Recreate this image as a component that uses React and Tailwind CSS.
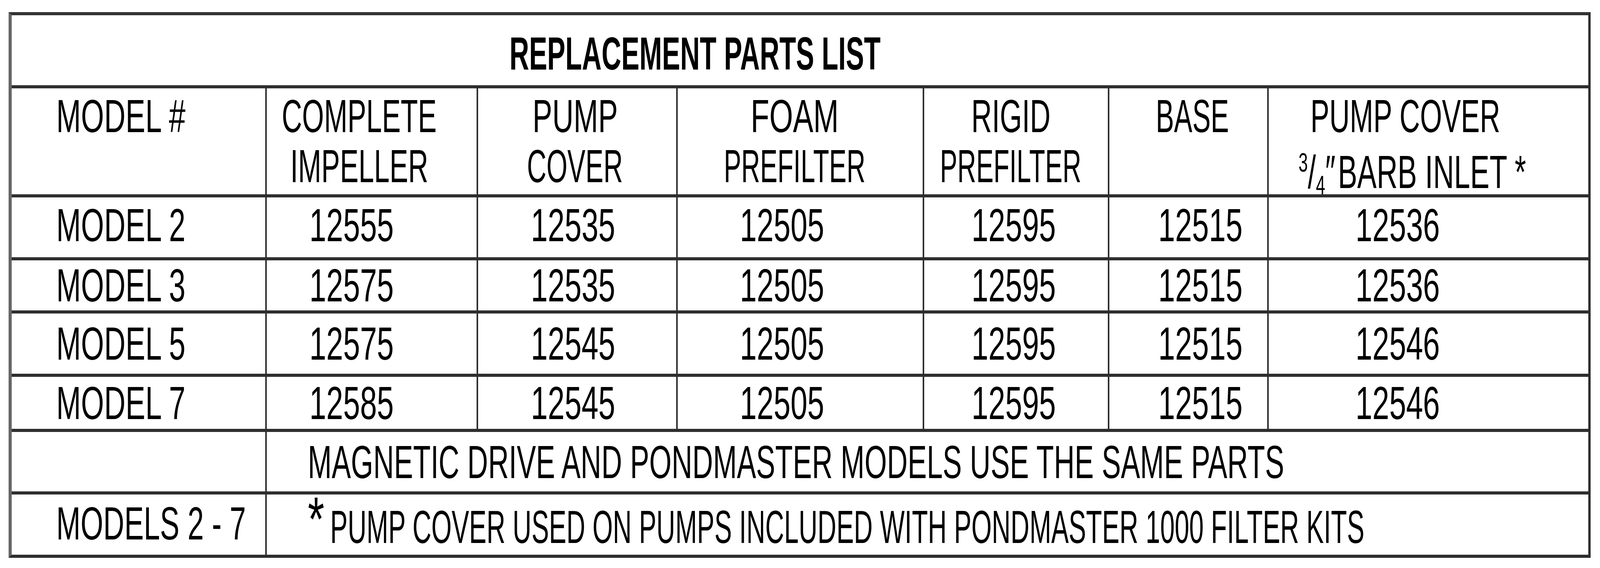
const font = "font-['Liberation_Sans',Arial,sans-serif]";

const grid = "grid grid-cols-[653px_541px_511px_631px_474px_408px_818px]";
const line = "border-[#2e2e2e]";

// header columns 2-6; each line is squeezed on its own so it keeps the narrow look of the original
const headers = [
  { pad: "pr-[63px]", lines: [["COMPLETE", "scale-x-[0.611]"], ["IMPELLER", "scale-x-[0.605]"]] },
  { pad: "pr-[11px]", lines: [["PUMP", "scale-x-[0.641]"], ["COVER", "scale-x-[0.585]"]] },
  { pad: "pr-[29px]", lines: [["FOAM", "scale-x-[0.661]"], ["PREFILTER", "scale-x-[0.566]"]] },
  { pad: "pr-[27px]", lines: [["RIGID", "scale-x-[0.619]"], ["PREFILTER", "scale-x-[0.565]"]] },
  { pad: "pl-[20px]", lines: [["BASE", "scale-x-[0.595]"]] },
];

const numPads = ["pr-[102px]", "pr-[21px]", "pr-[93px]", "pr-[12px]", "pl-[63px]", "pr-[157px]"];

const rows = [
  { h: "h-[161px]", nudge: "pb-[12px]", cells: ["MODEL 2", "12555", "12535", "12505", "12595", "12515", "12536"] },
  { h: "h-[136px]", nudge: "pb-[6px]", cells: ["MODEL 3", "12575", "12535", "12505", "12595", "12515", "12536"] },
  { h: "h-[162px]", nudge: "", cells: ["MODEL 5", "12575", "12545", "12505", "12595", "12515", "12546"] },
  { h: "h-[141px]", nudge: "", cells: ["MODEL 7", "12585", "12545", "12505", "12595", "12515", "12546"] },
];

function App() {
  return (
    <div className={`min-h-screen bg-white pt-[31px] pl-[22px] text-black whitespace-nowrap ${font}`}>
      <div className="w-[4050px] border-t-[8px] border-b-[8px] border-r-[6px] border-l-[8px] border-t-[#333] border-b-[#2e2e2e] border-r-[#2e2e2e] border-l-[#666] text-[118px] leading-[128px]">
        {/* TITLE */}
        <div className={`h-[187px] border-b-[8px] ${line} flex items-center justify-center pr-[538px] pt-[16px]`}>
          <span className="inline-block font-bold scale-x-[0.59]">REPLACEMENT PARTS LIST</span>
        </div>

        {/* HEADER */}
        <div className={`${grid} h-[279px] border-b-[8px] ${line}`}>
          <div className={`border-r-[4px] ${line} pl-[114px] pt-[7px]`}>
            <span className="inline-block origin-left scale-x-[0.644]">MODEL #</span>
          </div>
          {headers.map((h) => (
            <div key={h.lines[0][0]} className={`border-r-[4px] ${line} pt-[7px] flex flex-col items-center ${h.pad}`}>
              {h.lines.map(([t, s]) => (
                <span key={t} className={`block ${s}`}>
                  {t}
                </span>
              ))}
            </div>
          ))}
          <div className="pt-[7px] flex flex-col items-center">
            <span className="block pr-[118px]">
              <span className="inline-block scale-x-[0.614]">PUMP COVER</span>
            </span>
            <span className="block pr-[83px]">
              {/* set small and stretched up, so its layout box stays inside the frame */}
              <span className="inline-block text-[74.3px] scale-y-[1.587]">
                <span className="relative -top-[26.5px] text-[42.8px] leading-[0px]">3</span>
                <span>/</span>
                <span className="relative top-[9.5px] text-[42.8px] leading-[0px]">4</span>
                <span>″{"\u200A"}BARB INLET *</span>
              </span>
            </span>
          </div>
        </div>

        {/* DATA ROWS */}
        {rows.map((r) => (
          <div key={r.cells[0]} className={`${grid} ${r.h} border-b-[8px] ${line}`}>
            <div className={`border-r-[4px] ${line} pl-[114px] flex items-center ${r.nudge}`}>
              <span className="inline-block origin-left scale-x-[0.644]">{r.cells[0]}</span>
            </div>
            {r.cells.slice(1).map((c, i) => (
              <div
                key={i}
                className={`flex items-center justify-center ${r.nudge} ${numPads[i]} ${i < 5 ? `border-r-[4px] ${line}` : ""}`}
              >
                <span className="inline-block scale-x-[0.658]">{c}</span>
              </div>
            ))}
          </div>
        ))}

        {/* NOTE ROWS */}
        <div className={`grid grid-cols-[653px_minmax(0,1fr)] h-[160px] border-b-[8px] ${line}`}>
          <div className={`border-r-[4px] ${line}`}></div>
          <div className="flex items-center pl-[105px] pt-[4px] min-w-0">
            <span className="inline-block text-[73.5px] origin-left scale-y-[1.605]">
              MAGNETIC DRIVE AND PONDMASTER MODELS USE THE SAME PARTS
            </span>
          </div>
        </div>
        <div className="grid grid-cols-[653px_minmax(0,1fr)] h-[154px]">
          <div className={`border-r-[4px] ${line} pl-[114px] flex items-center pb-[6px]`}>
            <span className="inline-block origin-left scale-x-[0.633]">MODELS 2 - 7</span>
          </div>
          <div className="flex items-center pl-[105px] pb-[6px] min-w-0">
            <div className="w-full min-w-0">
              <span className="inline-block relative top-[12px] text-[160px] leading-[0px] origin-left scale-x-[0.68]">*</span>
              <span className="inline-block -ml-[5px] text-[66.9px] origin-left scale-y-[1.764]">
                PUMP COVER USED ON PUMPS INCLUDED WITH PONDMASTER 1000 FILTER KITS
              </span>
            </div>
          </div>
        </div>
      </div>
    </div>
  );
}

export default App;
